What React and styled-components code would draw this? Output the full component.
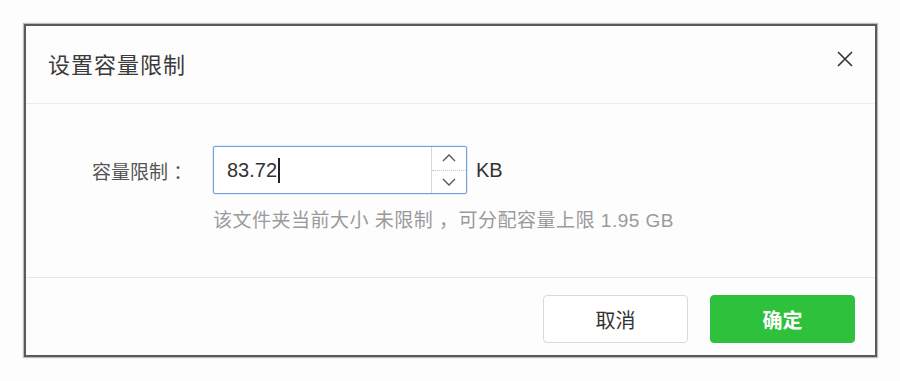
import React from "react";
import styled, { createGlobalStyle } from "styled-components";

const GlobalStyle = createGlobalStyle`
    html, body {
        margin: 0;
        padding: 0;
        background: #fdfdfd;
    }
    body {
        font-family: "Liberation Sans", "Noto Sans CJK SC", sans-serif;
        color: #333;
    }
`;

const Page = styled.div`
    padding: 24px 23px 24px 24px;
`;

const Dialog = styled.div`
    width: 853px;
    height: 333px;
    box-sizing: border-box;
    border: 2px solid #5a5a5a;
    box-shadow: 0 0 1px 1px rgba(0, 0, 0, 0.25);
    background: #fdfdfe;
    display: flex;
    flex-direction: column;
`;

const Header = styled.div`
    height: 78px;
    box-sizing: border-box;
    padding: 0 22px 0 22px;
    display: flex;
    align-items: center;
    justify-content: space-between;
    border-bottom: 1px solid #ececec;
`;

const Title = styled.h2`
    margin: -4px 0 0 0;
    font-size: 22px;
    font-weight: normal;
    letter-spacing: 1px;
    color: #3a3a3a;
`;

const CloseButton = styled.button`
    border: 0;
    background: transparent;
    padding: 0;
    width: 16px;
    height: 16px;
    margin-top: -11px;
    display: flex;
    cursor: pointer;
`;

const Body = styled.div`
    flex: 1;
    padding: 42px 0 0 66px;
    border-bottom: 1px solid #e6e6e6;
`;

const Form = styled.div`
    display: grid;
    grid-template-columns: 121px auto;
    row-gap: 11px;
    align-items: center;
`;

const Label = styled.label`
    font-size: 19px;
    color: #555;
    white-space: nowrap;
`;

const Field = styled.div`
    display: flex;
    align-items: center;
    gap: 9px;
`;

const NumberBox = styled.div`
    width: 254px;
    height: 48px;
    box-sizing: border-box;
    border: 1.5px solid #6f9fd6;
    border-radius: 2px;
    box-shadow: 0 0 2px rgba(90, 140, 210, 0.45);
    background: #fff;
    display: flex;
    align-items: stretch;
`;

const ValueText = styled.div`
    flex: 1;
    padding-left: 13px;
    display: flex;
    align-items: center;
    font-size: 20px;
    color: #333;
`;

const Caret = styled.span`
    display: inline-block;
    width: 1.5px;
    height: 25px;
    background: #222;
    margin-left: 1px;
`;

const Spinner = styled.div`
    width: 34px;
    border-left: 1px solid #d6d6d6;
    display: flex;
    flex-direction: column;
`;

const SpinStep = styled.div`
    flex: 1;
    display: flex;
    align-items: center;
    justify-content: center;
    border-top: ${(p) => (p.$lower ? "1px dotted #c8c8c8" : "0")};
`;

const Unit = styled.span`
    font-size: 20px;
    color: #333;
`;

const Hint = styled.div`
    grid-column: 2;
    font-size: 19px;
    letter-spacing: 0.5px;
    color: #9a9a9a;
`;

const Footer = styled.div`
    height: 77px;
    box-sizing: border-box;
    padding: 17px 20px 0 0;
    display: flex;
    justify-content: flex-end;
    gap: 22px;
`;

const Button = styled.button`
    width: 145px;
    height: 48px;
    border-radius: 4px;
    font-family: inherit;
    font-size: 20px;
    cursor: pointer;
    border: 1px solid ${(p) => (p.$primary ? "#2ec13b" : "#d9d9d9")};
    background: ${(p) => (p.$primary ? "#2ec13b" : "#fff")};
    color: ${(p) => (p.$primary ? "#fff" : "#333")};
    font-weight: ${(p) => (p.$primary ? "bold" : "normal")};
`;

function Arrow({ up }) {
    return (
        <svg width="14" height="8" viewBox="0 0 14 8">
            <polyline
                points={up ? "1,7 7,1 13,7" : "1,1 7,7 13,1"}
                fill="none"
                stroke="#555"
                strokeWidth="1.3"
            />
        </svg>
    );
}

export default function App() {
    return (
        <Page>
            <GlobalStyle />
            <Dialog>
                <Header>
                    <Title>设置容量限制</Title>
                    <CloseButton aria-label="close">
                        <svg width="16" height="16" viewBox="0 0 16 16">
                            <path d="M1 1L15 15M15 1L1 15" stroke="#333" strokeWidth="1.6" />
                        </svg>
                    </CloseButton>
                </Header>
                <Body>
                    <Form>
                        <Label>容量限制 ：</Label>
                        <Field>
                            <NumberBox>
                                <ValueText>
                                    83.72
                                    <Caret />
                                </ValueText>
                                <Spinner>
                                    <SpinStep>
                                        <Arrow up />
                                    </SpinStep>
                                    <SpinStep $lower>
                                        <Arrow />
                                    </SpinStep>
                                </Spinner>
                            </NumberBox>
                            <Unit>KB</Unit>
                        </Field>
                        <Hint>该文件夹当前大小 未限制 ，可分配容量上限 1.95 GB</Hint>
                    </Form>
                </Body>
                <Footer>
                    <Button>取消</Button>
                    <Button $primary>确定</Button>
                </Footer>
            </Dialog>
        </Page>
    );
}
